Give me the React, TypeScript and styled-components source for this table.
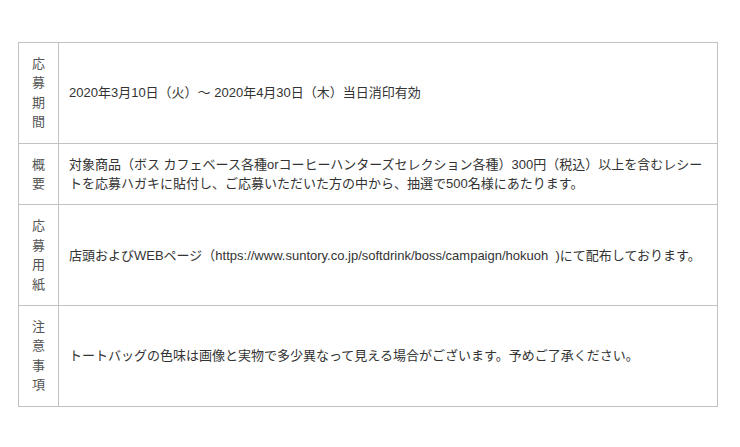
import React from 'react';
import styled, {createGlobalStyle} from "styled-components";

type Row = {
    label: string;
    body: string;
}

const rows: Row[] = [
    {label: "応募期間", body: "2020年3月10日（火）～ 2020年4月30日（木）当日消印有効"},
    {
        label: "概要",
        body: "対象商品（ボス カフェベース各種orコーヒーハンターズセレクション各種）300円（税込）以上を含むレシートを応募ハガキに貼付し、ご応募いただいた方の中から、抽選で500名様にあたります。"
    },
    {
        label: "応募用紙",
        body: "店頭およびWEBページ（https://www.suntory.co.jp/softdrink/boss/campaign/hokuoh\u00a0 )にて配布しております。"
    },
    {label: "注意事項", body: "トートバッグの色味は画像と実物で多少異なって見える場合がございます。予めご了承ください。"},
];

const GlobalStyle = createGlobalStyle`
  body {
    margin: 0;
    background: #ffffff;
    font-family: "Liberation Sans", "Noto Sans CJK JP", sans-serif;
  }
`

const Page = styled.div`
  padding: 42px 22px 40px 18px;
`

const InfoTable = styled.table`
  width: 100%;
  border-collapse: collapse;
  table-layout: fixed;
  font-size: 13px;
  line-height: 19.4px;
  color: #333333;
`

const LabelCell = styled.th`
  width: 40px;
  padding: 11px 13px;
  border: 1px solid #c2c2c2;
  font-weight: normal;
  text-align: center;
  vertical-align: middle;
  color: #555555;
  word-break: break-all;
`

const BodyCell = styled.td`
  padding: 11px 10px;
  border: 1px solid #c2c2c2;
  vertical-align: middle;
  text-align: left;
`

const App = () => {
    return (
        <>
            <GlobalStyle/>
            <Page>
                <InfoTable>
                    <colgroup>
                        <col style={{width: 40}}/>
                        <col/>
                    </colgroup>
                    <tbody>
                    {rows.map(row => (
                        <tr key={row.label}>
                            <LabelCell>{row.label}</LabelCell>
                            <BodyCell>{row.body}</BodyCell>
                        </tr>
                    ))}
                    </tbody>
                </InfoTable>
            </Page>
        </>
    );
}

export default App;
